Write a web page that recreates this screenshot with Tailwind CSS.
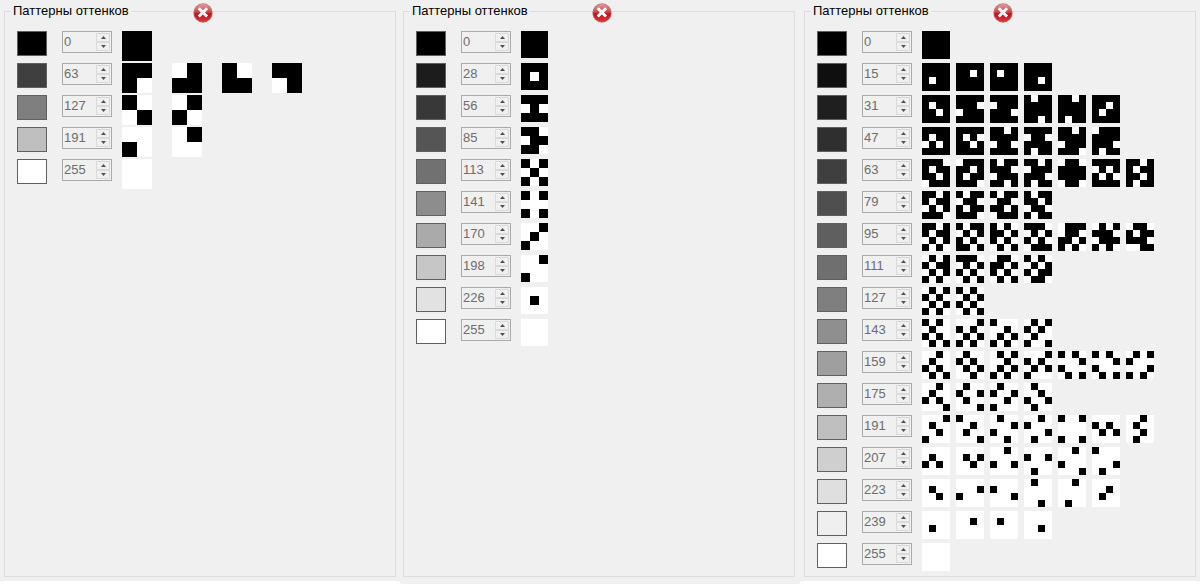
<!DOCTYPE html>
<html lang="ru">
<head>
<meta charset="utf-8">
<title>Паттерны оттенков</title>
<script src="https://cdn.jsdelivr.net/npm/@tailwindcss/browser@4"></script>
</head>
<body class="bg-white text-black font-['Liberation_Sans',Arial,sans-serif]">
<main id="panels" class="grid min-h-screen grid-cols-3"></main>

<template id="panel">
  <section class="flex bg-[#f0f0f0]">
    <div class="relative flex min-w-0 flex-1">
      <fieldset class="mt-[3px] min-w-0 flex-1 border border-[#dcdcdc] pt-3 pl-3">
        <legend class="-ml-1.5 px-0.5 text-[13px] leading-4">Паттерны оттенков</legend>
        <div data-rows></div>
      </fieldset>
      <button type="button" aria-label="Закрыть" class="absolute top-[3px] left-[189px] size-5">
        <svg viewBox="0 0 20 20" class="size-5" aria-hidden="true">
          <defs>
            <linearGradient id="red" x1="0" y1="0" x2="0" y2="1">
              <stop offset="0" stop-color="#e39a9a"/><stop offset=".45" stop-color="#cf4347"/>
              <stop offset=".55" stop-color="#b91219"/><stop offset="1" stop-color="#e0373b"/>
            </linearGradient>
          </defs>
          <circle cx="10" cy="10" r="9.7" fill="#b9777a"/>
          <circle cx="10" cy="10" r="8.9" fill="url(#red)"/>
          <path d="M6.8 6.3 13 12.5M13 6.3 6.8 12.5" stroke="#fff" stroke-width="3" stroke-linecap="square" fill="none"/>
        </svg>
      </button>
    </div>
  </section>
</template>

<template id="row">
  <div class="flex h-8 items-start">
    <div data-swatch class="h-[25px] w-[30px] shrink-0 border border-[#606060]"></div>
    <div class="ml-[15px] flex h-[22px] w-[50px] shrink-0 border border-[#a8aaae] py-px pr-px">
      <input type="text" disabled class="h-[18px] min-w-0 flex-1 bg-transparent pl-px text-[13px] leading-[18px] text-[#6d6d6d]">
      <div class="flex w-[14px] shrink-0 flex-col">
        <button type="button" disabled aria-label="Больше" class="flex h-[9px] items-center justify-center border border-[#dadada]"><svg viewBox="0 0 5 3" class="h-[3px] w-[5px]"><path d="M0 3 2.5 0 5 3z" fill="#505050"/></svg></button>
        <button type="button" disabled aria-label="Меньше" class="flex h-[9px] items-center justify-center border border-[#dadada]"><svg viewBox="0 0 5 3" class="h-[3px] w-[5px]"><path d="M0 0 2.5 3 5 0z" fill="#505050"/></svg></button>
      </div>
    </div>
    <div data-tiles class="ml-[10px] flex"></div>
  </div>
</template>

<script>
// A tile is a string of hex digits, one per row; set bits are black cells, leftmost cell first.
const panels = [
  { n: 2, tile: 30, gap: 'gap-5', column: 'px-1 pb-1 mb-[3px]', rows: [
    [0, '33'], [63, '32 13 23 31'], [127, '21 12'], [191, '02 10'], [255, '00']] },
  { n: 3, tile: 27, gap: 'gap-2', column: 'pl-[3px] pr-[5px] pb-[7px]', rows: [
    [0, '777'], [28, '757'], [56, '727'], [85, '636'], [113, '525'],
    [141, '505'], [170, '124'], [198, '104'], [226, '020'], [255, '000']] },
  { n: 4, tile: 28, gap: 'gap-1.5', column: 'px-1 pb-1 mb-[3px]', rows: [
    [0, 'FFFF'],
    [15, 'FFBF FDFF FBFF FFDF'],
    [31, 'FBDF FE7F F7EF BFFD DFFB FDBF'],
    [47, 'FB5F FADF DF6F F6FB DF7E 7FEB'],
    [63, 'EBD7 7DBE BE7D D7EB 6FF6 F5AF DBDB'],
    [79, 'DB5E B6BE B6D7 BD6B'],
    [95, 'DB5A B5AD ADA5 E5A7 76DA 5E7A 6BE3'],
    [111, '5B5A E5A5 6DA5 A5B6'],
    [127, '5A5A A5A5'],
    [143, 'A4A5 1A5A 825A 5A49'],
    [159, '24A5 4A52 525A 1A58 A185 A185 581A'],
    [175, '24A1 4941 4928 4294'],
    [191, '1428 8241 4182 2814 9009 0A50 2424'],
    [207, '04A0 0520 2090 0904 2081 8014'],
    [223, '0420 0180 0810 4002 2004 0240'],
    [239, '0040 0200 0400 0020'],
    [255, '0000']] },
];

const copy = id => document.getElementById(id).content.firstElementChild.cloneNode(true);

function drawTile(code, n, size) {
  let cells = '';
  [...code].forEach((digit, y) => {
    for (let x = 0; x < n; x++)
      if (parseInt(digit, 16) >> (n - 1 - x) & 1) cells += `M${x} ${y}h1v1h-1z`;
  });
  return `<svg viewBox="0 0 ${n} ${n}" width="${size}" height="${size}" class="shrink-0 bg-white" shape-rendering="crispEdges"><path d="${cells}"/></svg>`;
}

for (const p of panels) {
  const section = copy('panel');
  section.classList.add(...p.column.split(' '));
  for (const [value, codes] of p.rows) {
    const row = copy('row');
    row.querySelector('[data-swatch]').style.backgroundColor = `rgb(${value},${value},${value})`;
    const input = row.querySelector('input');
    input.setAttribute('value', value);
    input.setAttribute('aria-label', `Оттенок ${value}`);
    const tiles = row.querySelector('[data-tiles]');
    tiles.classList.add(p.gap);
    tiles.innerHTML = codes.split(' ').map(code => drawTile(code, p.n, p.tile)).join('');
    section.querySelector('[data-rows]').append(row);
  }
  document.getElementById('panels').append(section);
}
</script>
</body>
</html>
